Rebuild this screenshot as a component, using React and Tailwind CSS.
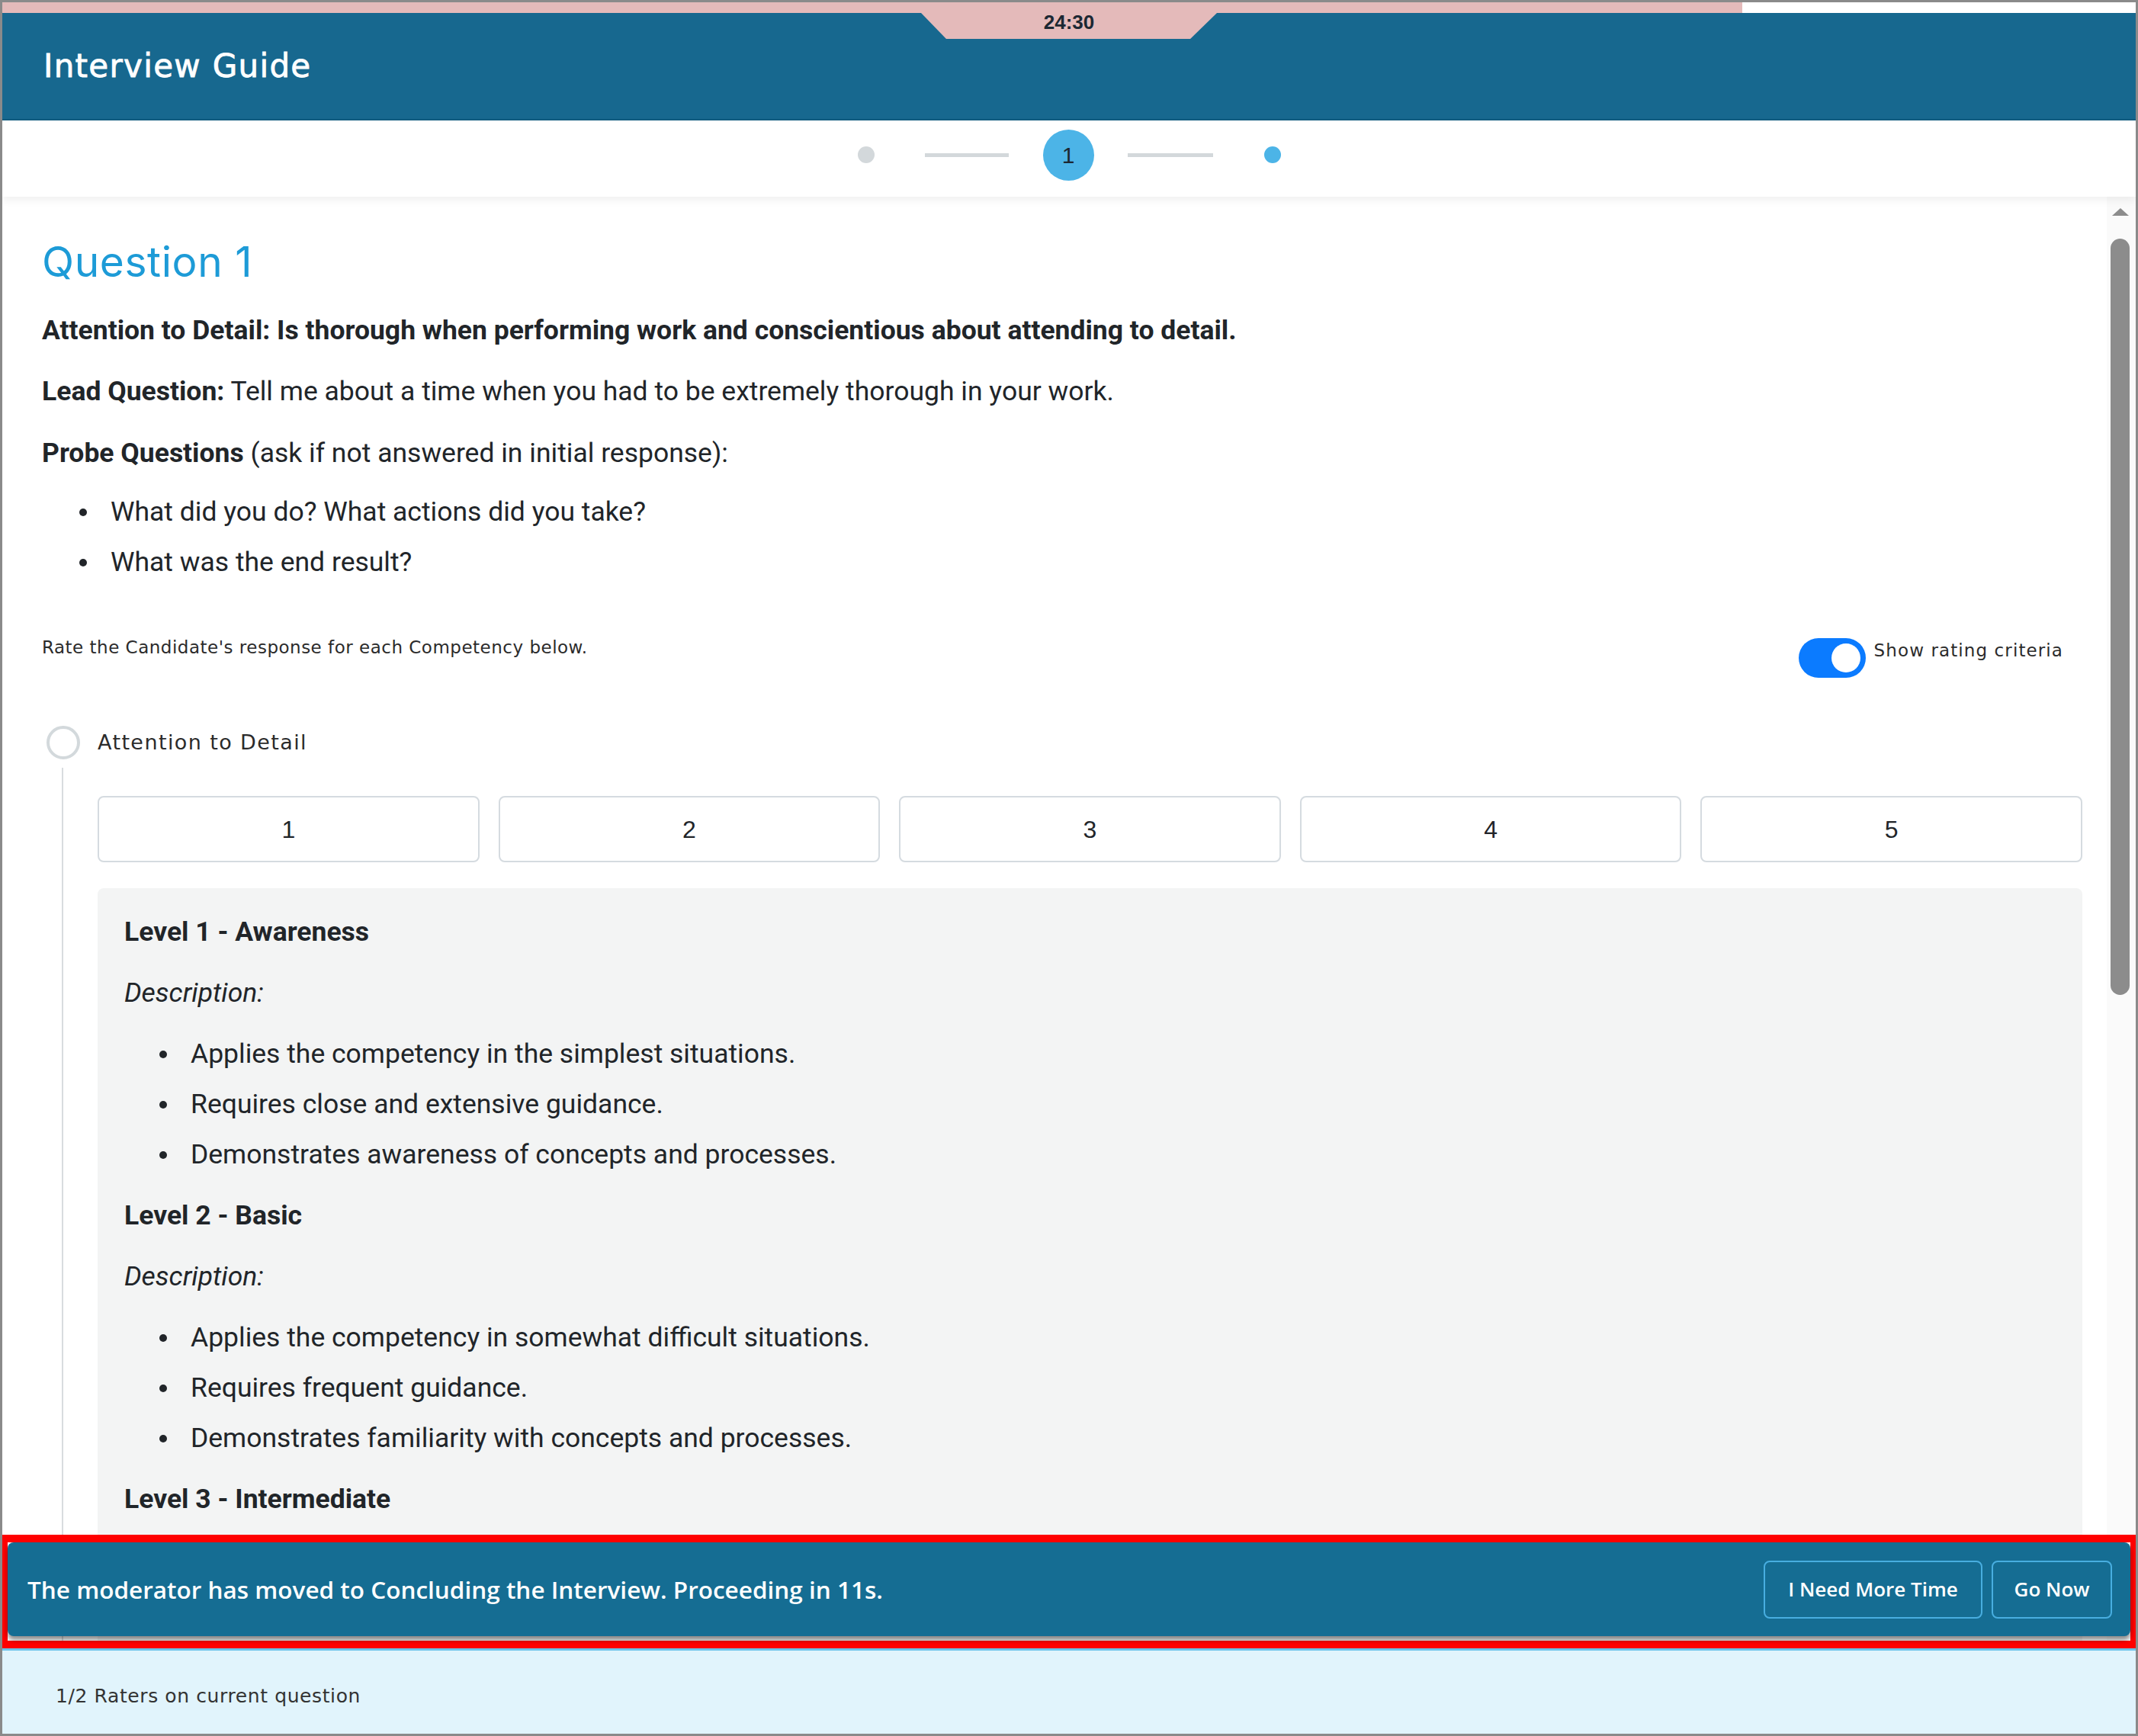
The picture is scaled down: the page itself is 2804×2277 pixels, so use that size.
import React from "react";

const body = "font-['Roboto',sans-serif]";
const ui = "font-['DejaVu_Sans',sans-serif]";
// round disc drawn in front of each list line
const bullet =
  "relative before:content-[''] before:absolute before:left-[-41px] before:top-[20px] before:w-[10px] before:h-[10px] before:rounded-full before:bg-[#212529]";

const levels = [
  {
    title: "Level 1 - Awareness",
    items: [
      "Applies the competency in the simplest situations.",
      "Requires close and extensive guidance.",
      "Demonstrates awareness of concepts and processes.",
    ],
  },
  {
    title: "Level 2 - Basic",
    items: [
      "Applies the competency in somewhat difficult situations.",
      "Requires frequent guidance.",
      "Demonstrates familiarity with concepts and processes.",
    ],
  },
  {
    title: "Level 3 - Intermediate",
    items: [
      "Applies the competency in difficult situations.",
      "Requires occasional guidance.",
      "Demonstrates understanding of concepts and processes.",
    ],
  },
];

/* ---------------- HEADER ---------------- */

const Header = () => (
  <>
    {/* timer progress */}
    <div className="h-[14px] flex shrink-0">
      <div className="w-[2282px] bg-[#e4baba]" />
      <div className="flex-1 bg-white" />
    </div>

    <header className="relative h-[141px] shrink-0 bg-[#17688f] border-b-2 border-[#125c80] flex items-center pl-[54px]">
      <h1 className={`${ui} text-white text-[42px] tracking-[1.3px] leading-none [-webkit-text-stroke:0.8px_white]`}>
        Interview Guide
      </h1>

      <div className="absolute top-0 left-1/2 -translate-x-1/2 w-[388px] h-[34px] bg-[#e4baba] [clip-path:polygon(0_0,100%_0,91%_100%,8.5%_100%)] flex justify-center">
        <span className="font-['Liberation_Sans',sans-serif] font-bold text-[26px] leading-[26px] -mt-[1px] text-[#1c2833]">
          24:30
        </span>
      </div>
    </header>
  </>
);

/* ---------------- STEPPER ---------------- */

const Stepper = () => (
  <div className="relative z-10 h-[100px] shrink-0 bg-white flex items-center justify-center pb-[10px] shadow-[0_5px_10px_rgba(0,0,0,0.06)]">
    <div className="w-[22px] h-[22px] rounded-full bg-[#d3d8db]" />
    <div className="ml-[66px] w-[110px] h-[5px] bg-[#d3d8db]" />
    <div className="ml-[45px] w-[67px] h-[67px] rounded-full bg-[#4cb4e7] flex items-center justify-center font-['Liberation_Sans',sans-serif] text-[30px] text-[#1c2833]">
      1
    </div>
    <div className="ml-[44px] w-[112px] h-[5px] bg-[#d3d8db]" />
    <div className="ml-[67px] w-[22px] h-[22px] rounded-full bg-[#4cb4e7]" />
  </div>
);

/* ---------------- RATING ---------------- */

const RatingCriteria = () => (
  <div className="mt-[34px] bg-[#f3f4f4] rounded-t-lg px-[35px] pt-[33px] pb-[40px] text-[35.5px] leading-[48px] text-[#212529]">
    {levels.map((lvl, i) => (
      <div key={lvl.title} className={i > 0 ? "mt-[32px]" : ""}>
        <h3 className="font-bold">{lvl.title}</h3>
        <p className="mt-[32px] italic">Description:</p>
        <ul className="mt-[32px] pl-[87px] flex flex-col gap-[18px]">
          {lvl.items.map((t) => (
            <li key={t} className={bullet}>
              {t}
            </li>
          ))}
        </ul>
      </div>
    ))}
  </div>
);

const Competency = () => (
  <div className="mt-[62px]">
    <div className="flex items-center h-[46px]">
      <div className="ml-[6px] w-[44px] h-[44px] rounded-full border-[4px] border-[#d3d9dc]" />
      <span className={`${ui} ml-[23px] text-[27px] tracking-[1.4px] text-[#2b2b2b]`}>
        Attention to Detail
      </span>
    </div>

    <div className="ml-[26px] mt-[10px] border-l-2 border-[#d8dcdf] pl-[45px] pt-[37px]">
      <div className="grid grid-cols-5 gap-[25px]">
        {[1, 2, 3, 4, 5].map((n) => (
          <button
            key={n}
            className="h-[87px] border-2 border-[#d5dbe0] rounded-lg bg-white font-['Liberation_Sans',sans-serif] text-[32px] text-[#212529]"
          >
            {n}
          </button>
        ))}
      </div>
      <RatingCriteria />
    </div>
  </div>
);

/* ---------------- MAIN ---------------- */

const Question = () => (
  <div className={`${body} flex-1 overflow-hidden pl-[52px] pr-[32px] pt-[53px]`}>
    <h2 className="font-['Inter',sans-serif] text-[55px] leading-[64px] text-[#1d9bd7] tracking-[0.6px]">
      Question 1
    </h2>

    <div className="text-[35.5px] leading-[48px] text-[#212529]">
      <p className="mt-[34px] font-bold">
        Attention to Detail: Is thorough when performing work and conscientious about attending to detail.
      </p>
      <p className="mt-[32px]">
        <b>Lead Question:</b> Tell me about a time when you had to be extremely thorough in your work.
      </p>
      <p className="mt-[33px]">
        <b>Probe Questions</b> (ask if not answered in initial response):
      </p>
      <ul className="mt-[29px] pl-[90px] flex flex-col gap-[18px]">
        <li className={bullet}>What did you do? What actions did you take?</li>
        <li className={bullet}>What was the end result?</li>
      </ul>
    </div>

    <div className={`${ui} mt-[76px] flex items-start justify-between`}>
      <span className="text-[23px] leading-[24px] tracking-[0.5px] text-[#2b2b2b]">
        Rate the Candidate's response for each Competency below.
      </span>
      <div className="flex items-start pr-[25px]">
        <div className="w-[88px] h-[52px] rounded-full bg-[#0b7bff] flex items-center justify-end pr-[7px]">
          <div className="w-[38px] h-[38px] rounded-full bg-white" />
        </div>
        <span className="ml-[11px] mt-[4px] text-[23px] leading-[24px] tracking-[1.1px] text-[#2b2b2b]">
          Show rating criteria
        </span>
      </div>
    </div>

    <Competency />
  </div>
);

const Scrollbar = () => (
  <div className="w-[38px] shrink-0 bg-[#fafafa] flex flex-col pl-[5px]">
    <div className="w-[25px] flex justify-center pt-[15px]">
      <div className="w-0 h-0 border-l-[11px] border-r-[11px] border-b-[10px] border-l-transparent border-r-transparent border-b-[#8c8c8c]" />
    </div>
    <div className="mt-[30px] w-[25px] h-[992px] rounded-full bg-[#8c8c8c]" />
  </div>
);

const Notice = () => (
  <div className="absolute left-[-3px] right-[-3px] bottom-0 h-[149px] border-[10px] border-[#ff0000]">
    <div className="h-[123px] rounded-lg bg-[#156d93] shadow-[0_5px_6px_rgba(0,0,0,0.45)] flex items-center justify-between pl-[26px] pr-[24px] font-['Open_Sans',sans-serif] text-white">
      <span className="text-[31.5px] font-semibold tracking-[0px]">
        The moderator has moved to Concluding the Interview. Proceeding in 11s.
      </span>
      <div className="flex gap-[12px]">
        <button className="h-[76px] w-[287px] rounded-lg border-2 border-[#48aee0] text-[26px] font-semibold">
          I Need More Time
        </button>
        <button className="h-[76px] w-[158px] rounded-lg border-2 border-[#48aee0] text-[26px] font-semibold">
          Go Now
        </button>
      </div>
    </div>
  </div>
);

const App = () => {
  return (
    <div className="w-[2804px] h-[2277px] border-[3px] border-[#8a8a8a] bg-white flex flex-col overflow-hidden">
      <Header />
      <Stepper />

      <div className="relative flex-1 min-h-0 flex">
        <Question />
        <Scrollbar />
        <Notice />
      </div>

      <footer className={`${ui} h-[112px] shrink-0 bg-[#e1f4fc] border-t-[3px] border-[#6cc4ea] flex items-center pl-[70px] pt-[10px]`}>
        <span className="text-[25px] tracking-[0.6px] text-[#333]">1/2 Raters on current question</span>
      </footer>
    </div>
  );
};

export default App;
